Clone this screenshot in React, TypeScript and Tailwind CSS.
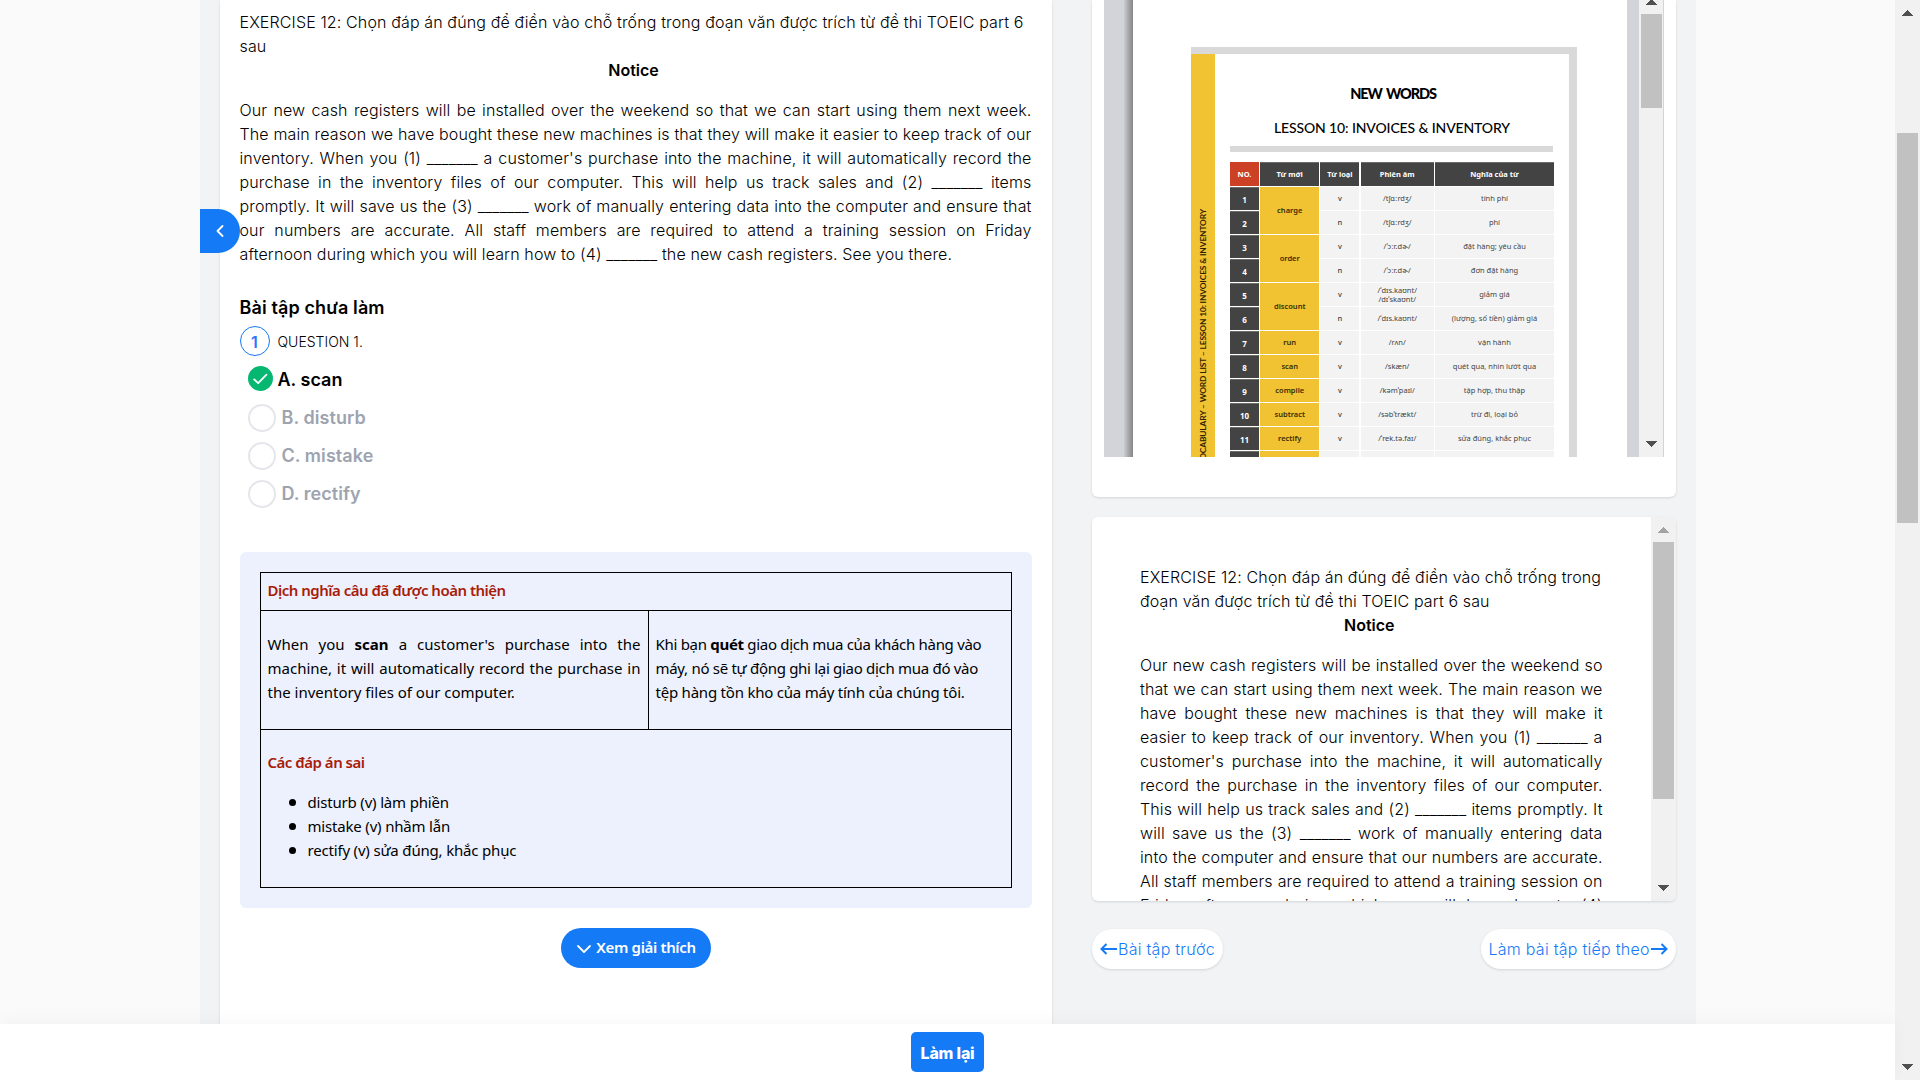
import React from "react";

const PASSAGE =
  "Our new cash registers will be installed over the weekend so that we can start using them next week. The main reason we have bought these new machines is that they will make it easier to keep track of our inventory. When you (1) _______ a customer's purchase into the machine, it will automatically record the purchase in the inventory files of our computer. This will help us track sales and (2) _______ items promptly. It will save us the (3) _______ work of manually entering data into the computer and ensure that our numbers are accurate. All staff members are required to attend a training session on Friday afternoon\u00a0during which you will learn how to (4) _______ the new cash registers. See you there.";

function Passage() {
  return (
    <div className="text-[16px] leading-[24px] font-light tracking-[0.13px] text-black">
      <p>EXERCISE 12: Chọn đáp án đúng để điền vào chỗ trống trong đoạn văn được trích từ đề thi TOEIC part 6 sau</p>
      <p className="pr-[4px] text-center font-semibold tracking-normal">Notice</p>
      <p className="mt-[16px] text-justify">{PASSAGE}</p>
    </div>
  );
}

function Arrow({ up = false, color = "#505050" }: { up?: boolean; color?: string }) {
  return (
    <svg width="11" height="6" viewBox="0 0 11 6" shapeRendering="crispEdges" className="shrink-0">
      <path d={up ? "M0 6L5.5 0L11 6Z" : "M0 0H11L5.5 6Z"} fill={color} />
    </svg>
  );
}

const ROWS: { n: number; word?: string; span?: number; t: string; ipa: string[]; vi: string }[] = [
  { n: 1, word: "charge", span: 2, t: "v", ipa: ["/tʃɑːrdʒ/"], vi: "tính phí" },
  { n: 2, t: "n", ipa: ["/tʃɑːrdʒ/"], vi: "phí" },
  { n: 3, word: "order", span: 2, t: "v", ipa: ["/ˈɔːr.dɚ/"], vi: "đặt hàng; yêu cầu" },
  { n: 4, t: "n", ipa: ["/ˈɔːr.dɚ/"], vi: "đơn đặt hàng" },
  { n: 5, word: "discount", span: 2, t: "v", ipa: ["/ˈdɪs.kaʊnt/", "/dɪˈskaʊnt/"], vi: "giảm giá" },
  { n: 6, t: "n", ipa: ["/ˈdɪs.kaʊnt/"], vi: "(lượng, số tiền) giảm giá" },
  { n: 7, word: "run", t: "v", ipa: ["/rʌn/"], vi: "vận hành" },
  { n: 8, word: "scan", t: "v", ipa: ["/skæn/"], vi: "quét qua, nhìn lướt qua" },
  { n: 9, word: "compile", t: "v", ipa: ["/kəmˈpaɪl/"], vi: "tập hợp, thu thập" },
  { n: 10, word: "subtract", t: "v", ipa: ["/səbˈtrækt/"], vi: "trừ đi, loại bỏ" },
  { n: 11, word: "rectify", t: "v", ipa: ["/ˈrek.tə.faɪ/"], vi: "sửa đúng, khắc phục" },
  { n: 12, word: "", t: "", ipa: [], vi: "" },
];

function WordTable() {
  const head = "flex items-center justify-center bg-[#434343] border-t border-[#6b6b6b] text-white font-bold";
  return (
    <div className="mt-[10px] ml-[15px] grid w-[324px] auto-rows-[23px] grid-cols-[29px_59px_39px_73px_119px] grid-rows-[24px] gap-x-[1.25px] gap-y-px font-['Noto_Sans','DejaVu_Sans',sans-serif] text-[7.5px] leading-[9px] text-[#444]">
      <div className="flex items-center justify-center bg-[#cc4125] font-bold text-white">NO.</div>
      <div className={head}>Từ mới</div>
      <div className={head}>Từ loại</div>
      <div className={head}>Phiên âm</div>
      <div className={head}>Nghĩa của từ</div>
      {ROWS.map((r) => (
        <React.Fragment key={r.n}>
          <div className="flex items-center justify-center border-t border-[#6b6b6b] bg-[#434343] text-[8px] font-bold text-white">{r.n < 12 ? r.n : ""}</div>
          {r.word !== undefined && (
            <div className={`flex items-center justify-center bg-[#f1c232] font-semibold text-[#3a2d05] ${r.span ? "row-span-2" : ""}`}>{r.word}</div>
          )}
          <div className="flex items-center justify-center bg-[#f3f3f3] font-medium">{r.t}</div>
          <div className="flex flex-col items-center justify-center bg-[#f3f3f3]">
            {r.ipa.map((s) => (
              <span key={s}>{s}</span>
            ))}
          </div>
          <div className="flex items-center justify-center bg-[#f3f3f3]">{r.vi}</div>
        </React.Fragment>
      ))}
    </div>
  );
}

function DocumentCard() {
  return (
    <div className="h-[497px] rounded-b-md bg-white px-[12px] shadow">
      <div className="flex h-[457px] overflow-hidden bg-[#d3d4d9]">
        <div className="w-[20px]" />
        <div className="w-[9px] bg-gradient-to-r from-[#cbccd1] to-[#858587]" />
        <div className="w-[494px] bg-white pt-[47px] pl-[58px]">
          <div className="flex h-[410px] w-[386px] flex-col overflow-hidden">
            <div className="h-[7px] shrink-0 bg-[#d9d9d9]" />
            <div className="flex h-[403px]">
              <div className="flex w-[24px] justify-center overflow-hidden bg-[#f1c232] pt-[155px]">
                <span className="h-fit rotate-180 whitespace-nowrap font-['Lato',sans-serif] text-[8.4px] leading-[24px] font-bold tracking-[-0.13px] text-[#2b2204] [writing-mode:vertical-rl]">
                  VOCABULARY – WORD LIST – LESSON 10: INVOICES & INVENTORY
                </span>
              </div>
              <div className="w-[354px]">
                <h2 className="mt-[30px] ml-[2px] text-center font-['Lato',sans-serif] text-[14.5px] leading-[20px] font-black tracking-[-1.1px] text-black [word-spacing:2px]">NEW WORDS</h2>
                <h3 className="mt-[14px] text-center font-['Lato',sans-serif] text-[14px] leading-[20px] font-medium tracking-[-0.13px] whitespace-nowrap text-black">LESSON 10: INVOICES & INVENTORY</h3>
                <div className="mt-[8px] ml-[15px] h-[6px] w-[323px] bg-[#d9d9d9]" />
                <WordTable />
              </div>
              <div className="w-[8px] bg-[#d9d9d9]" />
            </div>
          </div>
        </div>
        <div className="w-[12px]" />
        <div className="flex w-[25px] flex-col items-center bg-[#f1f1f1]">
          <div className="-mt-px h-[6px]"><Arrow up /></div>
          <div className="mt-[9px] h-[94px] w-[21px] bg-[#c1c1c1]" />
          <div className="mt-auto mb-[10px]"><Arrow /></div>
        </div>
      </div>
    </div>
  );
}

function PassageCard() {
  return (
    <div className="mt-[20px] flex h-[384px] overflow-hidden rounded-md bg-white shadow">
      <div className="w-[559px] pt-[48px] pr-[48px] pl-[48px]">
        <Passage />
      </div>
      <div className="flex w-[25px] flex-col items-center bg-[#f1f1f1]">
        <div className="mt-[10px] h-[6px]"><Arrow up color="#a3a3a3" /></div>
        <div className="mt-[9px] h-[257px] w-[21px] bg-[#c1c1c1]" />
        <div className="mt-auto mb-[10px]"><Arrow /></div>
      </div>
    </div>
  );
}

function LongArrow({ flip = false }: { flip?: boolean }) {
  return (
    <svg width="17" height="16" viewBox="0 0 17 16" fill="none" stroke="#147af6" strokeWidth="2" className={flip ? "rotate-180" : ""}>
      <path d="M1.5 8H17M6.5 3L1.5 8L6.5 13" />
    </svg>
  );
}

function Explanation() {
  return (
    <div className="mt-[44px] h-[356px] rounded-md bg-[#edf1fe] p-[20px] font-['Noto_Sans',sans-serif] text-[15px] leading-[24px] text-black">
      <div className="h-[316px] border border-black">
        <div className="h-[38px] border-b border-black pt-[5px] pl-[7px] font-semibold tracking-[-0.5px] text-[#a81c0a]">Dịch nghĩa câu đã được hoàn thiện</div>
        <div className="flex h-[119px] border-b border-black">
          <div className="w-[388px] border-r border-black pt-[21px] pr-[7px] pl-[7px]">
            <p className="text-justify">When you <b>scan</b> a customer's purchase into the machine, it will automatically record the purchase in the inventory files of our computer.</p>
          </div>
          <div className="flex-1 pt-[21px] pl-[7px] tracking-[-0.3px] whitespace-nowrap">
            <p>Khi bạn <b>quét</b> giao dịch mua của khách hàng vào</p>
            <p>máy, nó sẽ tự động ghi lại giao dịch mua đó vào</p>
            <p className="tracking-[-0.22px]">tệp hàng tồn kho của máy tính của chúng tôi.</p>
          </div>
        </div>
        <div className="pt-[20px] pl-[7px]">
          <p className="font-semibold tracking-[-0.5px] text-[#a81c0a]">Các đáp án sai</p>
          <ul className="mt-[16px] flex flex-col pl-[21px] tracking-[-0.18px]">
            {["disturb (v) làm phiền", "mistake (v) nhầm lẫn", "rectify (v) sửa đúng, khắc phục"].map((t) => (
              <li key={t} className="flex items-center gap-[12px]">
                <span className="h-[7px] w-[7px] rounded-full bg-black" />
                {t}
              </li>
            ))}
          </ul>
        </div>
      </div>
    </div>
  );
}

export default function App() {
  return (
    <div className="flex h-[1080px] w-[1920px] overflow-hidden bg-[#fafafa] font-['Inter',sans-serif]">
      <div className="flex w-[1895px] flex-col">
        <div className="flex h-[1024px] justify-center overflow-hidden">
          <div className="relative flex w-[1496px] bg-[#f2f3f5] px-[20px]">
            <main className="h-[1024px] w-[832px] bg-white px-[20px] pt-[10px] shadow">
              <Passage />
              <h3 className="mt-[28px] text-[18px] leading-[28px] font-semibold tracking-[0.12px] text-black">Bài tập chưa làm</h3>
              <div className="mt-[4px] flex items-center gap-[8px]">
                <span className="flex h-[30px] w-[30px] items-center justify-center rounded-full border border-[#147af6] pt-px text-[16px] font-semibold text-[#2f74f5]">1</span>
                <span className="text-[14px] font-light">QUESTION 1.</span>
              </div>
              <div className="mt-[10px] flex h-[28px] items-start gap-[5px] pl-[8px]">
                <span className="flex h-[25px] w-[25px] items-center justify-center rounded-full bg-[#06b771]">
                  <svg width="15" height="12" viewBox="0 0 15 12" fill="none" stroke="white" strokeWidth="1.8" strokeLinecap="round" strokeLinejoin="round"><path d="M1.2 6.4L5.2 10.2L13.5 1.6" /></svg>
                </span>
                <span className="text-[18px] leading-[28px] font-semibold text-black">A. scan</span>
              </div>
              {["B. disturb", "C. mistake", "D. rectify"].map((o) => (
                <div key={o} className="mt-[10px] flex h-[28px] items-center gap-[6px] pl-[8px]">
                  <span className="h-[28px] w-[28px] rounded-full border-2 border-[#e5e6eb]" />
                  <span className="text-[18px] leading-[28px] font-semibold tracking-[0.06px] text-[#9ea3b0]">{o}</span>
                </div>
              ))}
              <Explanation />
              <div className="mt-[20px] flex justify-center">
                <button className="flex h-[40px] w-[150px] items-center justify-center gap-[4px] rounded-full bg-[#147af6] pb-[2px] pl-px font-['Noto_Sans',sans-serif] text-[15px] font-semibold tracking-[-0.35px] whitespace-nowrap text-white">
                  <svg width="16" height="16" viewBox="0 0 16 16" fill="none" stroke="white" strokeWidth="1.8" strokeLinecap="round" strokeLinejoin="round" className="mt-[3px]"><path d="M2 5L8 11L14 5" /></svg>
                  Xem giải thích
                </button>
              </div>
            </main>
            <aside className="ml-[40.5px] w-[583.5px]">
              <DocumentCard />
              <PassageCard />
              <div className="mt-[28px] flex justify-between text-[16px] font-light tracking-[0.26px] text-[#147af6]">
                <button className="flex h-[40px] w-[131px] items-center rounded-full bg-white pl-[8px] whitespace-nowrap shadow">
                  <LongArrow />
                  <span className="ml-px">Bài tập trước</span>
                </button>
                <button className="flex h-[40px] w-[195px] items-center rounded-full bg-white pl-[8px] whitespace-nowrap shadow">
                  <span className="mr-px">Làm bài tập tiếp theo</span>
                  <LongArrow flip />
                </button>
              </div>
            </aside>
            <button className="absolute top-[209px] left-0 flex h-[44px] w-[40px] items-center justify-center rounded-r-full bg-[#147af6]">
              <svg width="8" height="12" viewBox="0 0 8 12" fill="none" stroke="white" strokeWidth="1.8" strokeLinecap="round" strokeLinejoin="round"><path d="M6.5 1L1.5 6L6.5 11" /></svg>
            </button>
          </div>
        </div>
        <footer className="relative flex h-[56px] items-center justify-center bg-white shadow-[0_-4px_16px_rgba(0,0,0,0.03)]">
          <button className="h-[40px] w-[73px] rounded-[5px] bg-[#147af6] pt-px text-[16px] font-extrabold tracking-[-0.2px] text-white">Làm lại</button>
        </footer>
      </div>
      <div className="flex w-[25px] flex-col items-center bg-[#f1f1f1]">
        <div className="mt-[10px] h-[6px]"><Arrow up /></div>
        <div className="mt-[117px] h-[390px] w-[21px] bg-[#c1c1c1]" />
        <div className="mt-auto mb-[10px] h-[6px]"><Arrow /></div>
      </div>
    </div>
  );
}
